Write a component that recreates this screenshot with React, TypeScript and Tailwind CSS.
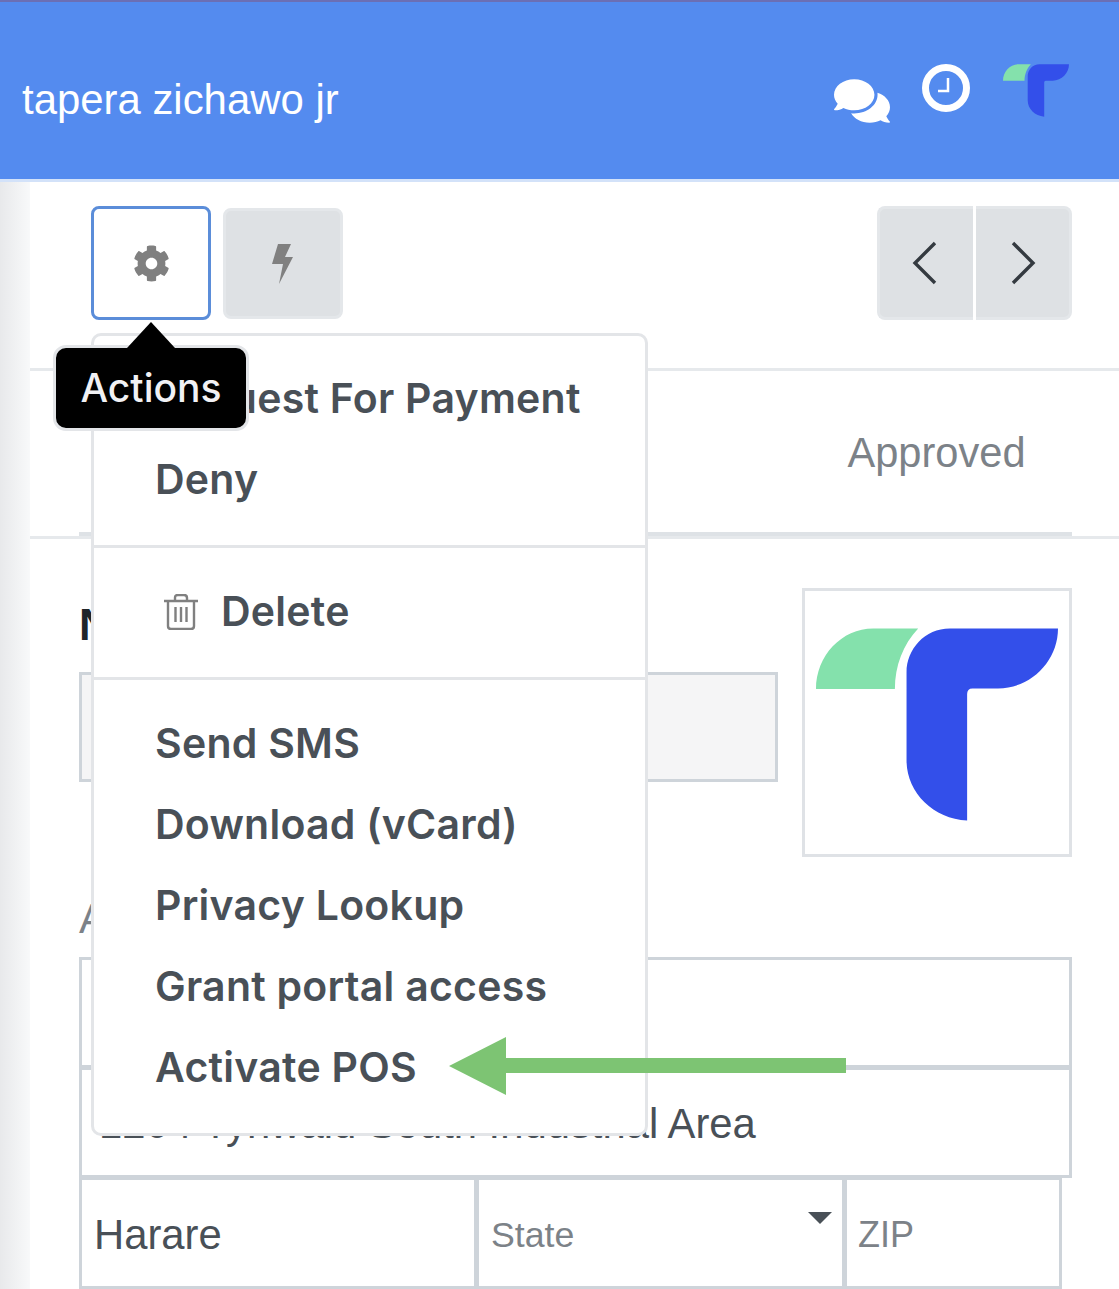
import { FaCog, FaComments } from "react-icons/fa";

const LogoMark = ({ className }: { className: string }) => (
  <svg viewBox="108 178 727 577" className={className}>
    <path d="M108 360H345C345 290 370 225 415 178H280C185 178 108 260 108 360Z" fill="#84E1AC" />
    <path
      d="M835 178H510C435 178 380 240 380 310V575C380 670 460 750 562 755V375Q562 358 578 358H655C755 358 835 275 835 178Z"
      fill="#334FEA"
    />
  </svg>
);

const MenuItem = ({ label }: { label: string }) => (
  <div className="h-[81px] pl-[60px] flex items-center text-[41px] font-[560] tracking-[0.25px] text-[#495057] whitespace-nowrap">
    {label}
  </div>
);

const TextBox = ({ className, children }: { className: string; children?: any }) => (
  <div
    className={`border-[3px] border-[#ced4da] bg-white flex items-center text-[41.8px] text-[#495057] overflow-hidden whitespace-nowrap ${className}`}
  >
    {children}
  </div>
);

export default function App() {
  return (
    <div className="relative w-[1119px] h-[1289px] overflow-hidden bg-white font-['Liberation_Sans',sans-serif]">
      <header className="h-[182px] bg-[#548bef] border-t-2 border-t-[#6b6fb5] border-b-[3px] border-b-[#d3e2f9] flex items-center justify-between pl-[22px] pr-[50px]">
        <span className="text-[41.9px] text-white mt-[19px]">tapera zichawo jr</span>
        <div className="flex items-start h-[56px] mt-[2px]">
          <FaComments className="text-white w-[56px] h-[56px] mt-[9px]" />
          <svg viewBox="0 0 48 48" className="w-[48px] h-[48px] ml-[32px] mt-0">
            <circle cx="24" cy="24" r="20.5" fill="none" stroke="#fff" strokeWidth="7" />
            <path d="M16 27H26V14" fill="none" stroke="#fff" strokeWidth="2.5" />
          </svg>
          <LogoMark className="w-[66px] h-[53px] ml-[33px]" />
        </div>
      </header>

      <div className="flex h-[1107px]">
        <div className="w-[30px] shrink-0 bg-gradient-to-r from-[#e8e9eb] to-[#f8f9fa]" />
        <main className="flex-1 min-w-0">
          <div className="h-[189px] border-b-[3px] border-[#e6e9ec] pt-[24px] pl-[61px] pr-[47px] flex justify-between items-start">
            <div className="flex items-start gap-[12px]">
              <button className="w-[120px] h-[114px] rounded-[8px] border-[3px] border-[#5b8dd9] bg-white flex items-center justify-center">
                <FaCog className="w-[37px] h-[37px] text-[#808080]" />
              </button>
              <button className="w-[120px] h-[111px] mt-[2px] rounded-[8px] border-[3px] border-[#e4e7ea] bg-[#dee1e4] flex items-center justify-center">
                <svg viewBox="0 0 22 40" className="w-[22px] h-[40px]">
                  <path d="M6 0H19L13 13H21L7 40L11 20H0Z" fill="#808080" />
                </svg>
              </button>
            </div>
            <div className="flex gap-[3px]">
              <button className="w-[96px] h-[114px] rounded-l-[8px] border-[3px] border-r-0 border-[#e4e7ea] bg-[#dee1e4] flex items-center justify-center pr-[4px]">
                <svg viewBox="0 0 28 44" className="w-[28px] h-[44px]">
                  <path d="M24 2L4 22L24 42" fill="none" stroke="#343a40" strokeWidth="3.4" />
                </svg>
              </button>
              <button className="w-[96px] h-[114px] rounded-r-[8px] border-[3px] border-l-0 border-[#e4e7ea] bg-[#dee1e4] flex items-center justify-center">
                <svg viewBox="0 0 28 44" className="w-[28px] h-[44px]">
                  <path d="M4 2L24 22L4 42" fill="none" stroke="#343a40" strokeWidth="3.4" />
                </svg>
              </button>
            </div>
          </div>

          <div className="h-[168px] border-b-[3px] border-[#e6e9ec] pl-[49px] pr-[47px]">
            <div className="h-[165px] border-b-[4px] border-[#dee2e6] flex justify-end">
              <div className="w-[269px] h-[161px] pt-[4px] pr-[2px] flex items-center justify-center text-[41.6px] text-[#7c8288]">
                Approved
              </div>
            </div>
          </div>

          <div className="pt-[49px] pl-[49px] pr-[47px]">
            <div className="flex gap-[24px] h-[268px]">
              <div className="w-[699px]">
                <div className="h-[84px] pt-[4px] text-[44px] font-bold text-[#212529]">Name</div>
                <div className="h-[110px] border-[3px] border-[#ced4da] bg-[#f5f5f6]" />
              </div>
              <div className="w-[270px] h-[269px] border-[3px] border-[#dfe2e6] bg-white flex items-center justify-center">
                <LogoMark className="w-[242px] h-[193px] mt-[3px]" />
              </div>
            </div>
            <div className="h-[101px] pt-[32px] text-[41.6px] text-[#7c8288]">Address</div>
            <TextBox className="h-[111px]" />
            <TextBox className="h-[111px] mt-[-1px] pl-[17px] pt-[3px]">1204 Tynwald South Industrial Area</TextBox>
            <div className="flex mt-[-1px]">
              <TextBox className="w-[398px] h-[112px] pl-[12px] pt-[4px]">Harare</TextBox>
              <div className="relative w-[369px] h-[112px] ml-[-1px] border-[3px] border-[#ced4da] bg-white flex items-center pl-[12px] pt-[5px] text-[35.7px] text-[#7c8288]">
                State
                <div className="absolute right-[10px] top-[32px] w-0 h-0 border-x-[12px] border-x-transparent border-t-[12px] border-t-[#495057]" />
              </div>
              <div className="w-[218px] h-[112px] ml-[-1px] border-[3px] border-[#ced4da] bg-white flex items-center pl-[11px] pt-[3px] text-[36px] text-[#7c8288]">
                ZIP
              </div>
            </div>
          </div>
        </main>
      </div>

      {/* dropdown */}
      <div className="absolute left-[91px] top-[333px] w-[557px] h-[803px] rounded-[10px] border-[3px] border-[#e3e5e8] bg-white font-['Inter',sans-serif] pt-[22px]">
        <div className="pl-[1px]">
          <MenuItem label="Request For Payment" />
          <MenuItem label="Deny" />
        </div>
        <div className="h-[3px] bg-[#e3e5e8] mt-[25px]" />
        <div className="h-[81px] mt-[23px] pl-[70px] flex items-center gap-[23px] text-[41px] font-[560] tracking-[0.25px] text-[#495057]">
          <svg viewBox="0 0 34 36" className="w-[34px] h-[36px]" fill="none" stroke="#808080" strokeWidth="2.4">
            <path d="M0 7H34M11 7V4Q11 1 14 1H20Q23 1 23 4V7M4 7V32Q4 35 7 35H27Q30 35 30 32V7M11.5 13V28M17 13V28M22.5 13V28" />
          </svg>
          Delete
        </div>
        <div className="h-[3px] bg-[#e3e5e8] mt-[25px]" />
        <div className="pt-[23px] pl-[1px]">
          <MenuItem label="Send SMS" />
          <MenuItem label="Download (vCard)" />
          <MenuItem label="Privacy Lookup" />
          <MenuItem label="Grant portal access" />
          <MenuItem label="Activate POS" />
        </div>
      </div>

      {/* tooltip */}
      <div className="absolute left-[53px] top-[345px] w-[196px] h-[86px] rounded-[13px] border-[3px] border-[#e3e5e8] bg-black flex items-center justify-center text-[39px] font-medium text-[#f1f1f4] font-['Inter',sans-serif]">
        Actions
      </div>
      <div className="absolute left-[127px] top-[322px] w-0 h-0 border-x-[24px] border-x-transparent border-b-[26px] border-b-black" />

      {/* green arrow */}
      <svg viewBox="0 0 397 58" className="absolute left-[449px] top-[1037px] w-[397px] h-[58px]">
        <path d="M0 29L57 0V21H397V36H57V58Z" fill="#7DC473" />
      </svg>
    </div>
  );
}
